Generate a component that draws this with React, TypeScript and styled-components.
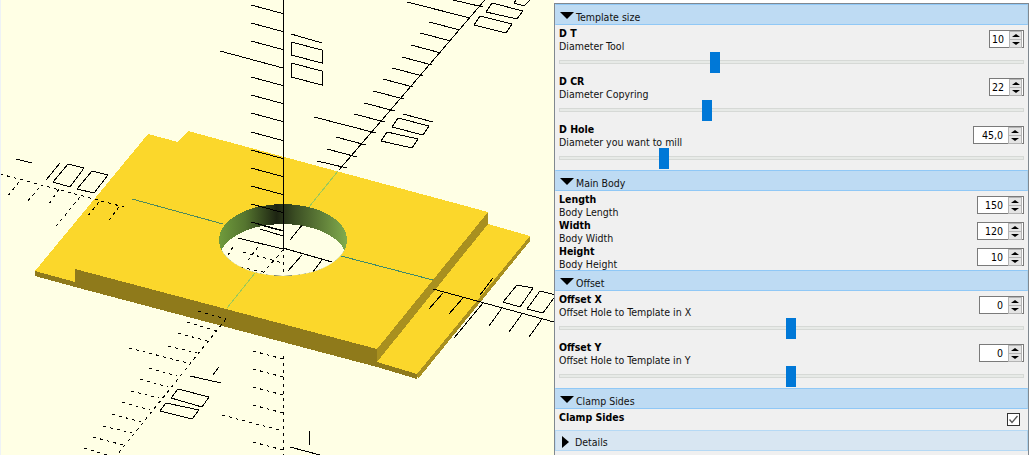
import styled, { createGlobalStyle } from "styled-components";

const GlobalStyle = createGlobalStyle`
  html, body {
    margin: 0;
    padding: 0;
    background: #fff;
  }
`;

const Window = styled.div`
  display: flex;
  width: 1033px;
  height: 455px;
  overflow: hidden;
  font-family: "DejaVu Sans", sans-serif;
  font-stretch: condensed;
  font-size: 10.5px;
  color: #111;
`;

const Viewport = styled.div`
  width: 554px;
  height: 455px;
  flex: none;
  border-left: 1px solid #eef2f6;
  box-sizing: border-box;
  background: #ffffe5;
  svg {
    display: block;
  }
`;

const Panel = styled.div`
  width: 475px;
  height: 452px;
  flex: none;
  margin-top: 3px;
  box-sizing: border-box;
  border: 1px solid #808890;
  border-bottom: 0;
  background: #f0f0f0;
`;

const SectionHeader = styled.div<{ $collapsed?: boolean }>`
  display: flex;
  align-items: center;
  height: 21px;
  box-sizing: border-box;
  margin-top: 1px;
  padding-top: 2px;
  padding-left: ${(p) => (p.$collapsed ? "6px" : "4px")};
  gap: ${(p) => (p.$collapsed ? "6px" : "2px")};
  background: ${(p) => (p.$collapsed ? "#d8e6f2" : "#bedbf3")};
  border: 1px solid ${(p) => (p.$collapsed ? "#b5d9f5" : "#90c8f6")};
  border-left-color: #bedbf3;
  border-right-color: #b0d4ee;
  &:first-child {
    margin-top: 0;
  }
`;

const SectionTitle = styled.span`
  margin-top: 2px;
`;

const ExpandedArrow = styled.span`
  width: 0;
  height: 0;
  border-left: 7px solid transparent;
  border-right: 7px solid transparent;
  border-top: 7px solid #000;
`;

const CollapsedArrow = styled.span`
  width: 0;
  height: 0;
  border-top: 6px solid transparent;
  border-bottom: 6px solid transparent;
  border-left: 7px solid #000;
`;

const Param = styled.div`
  display: flex;
  flex-direction: column;
`;

const ParamHead = styled.div`
  display: flex;
  justify-content: space-between;
  height: 26px;
  padding: 0 4px;
`;

const ParamText = styled.div`
  padding-top: 2px;
  line-height: 13px;
  white-space: nowrap;
`;

const ParamName = styled.div`
  font-weight: 700;
  color: #000;
`;

const SpinBox = styled.div<{ $width: number }>`
  display: flex;
  align-items: center;
  justify-content: space-between;
  width: ${(p) => p.$width}px;
  height: 18px;
  margin-top: 5px;
  box-sizing: border-box;
  border: 1px solid #7a7a7a;
  background: #fff;
  padding: 0 1px 0 2px;
`;

const SpinValue = styled.span`
  flex: 1;
  text-align: right;
  padding-right: 5px;
  line-height: 16px;
  color: #000;
`;

const SpinButtons = styled.div`
  display: flex;
  flex-direction: column;
  width: 14px;
`;

const SpinButton = styled.div<{ $down?: boolean }>`
  display: flex;
  align-items: center;
  justify-content: center;
  height: 7px;
  background: #e4e4e4;
  border: 1px solid #b4b4b4;
  border-top-width: ${(p) => (p.$down ? 0 : "1px")};
  &::before {
    content: "";
    width: 0;
    height: 0;
    border-left: 4px solid transparent;
    border-right: 4px solid transparent;
    ${(p) => (p.$down ? "border-top: 3px solid #000;" : "border-bottom: 3px solid #000;")}
  }
`;

const SliderBar = styled.div`
  position: relative;
  height: 21px;
  margin: 1px 4px 0;
  padding-top: 8px;
  box-sizing: border-box;
`;

const Track = styled.div`
  height: 4px;
  box-sizing: border-box;
  border: 1px solid #d6d9d6;
  background: #e7eae7;
`;

const Thumb = styled.div<{ $at: number }>`
  position: absolute;
  top: 0;
  left: ${(p) => p.$at}px;
  width: 10px;
  height: 21px;
  background: #0078d7;
`;

const CheckRow = styled.div`
  display: flex;
  justify-content: space-between;
  height: 20px;
  padding: 0 8px 0 4px;
`;

const CheckBox = styled.div`
  width: 13px;
  height: 13px;
  margin-top: 4px;
  box-sizing: border-box;
  border: 1px solid #333;
  background: #fff;
  svg {
    display: block;
  }
`;

type Seg = [number, number, number, number];

const solid: Seg[] = [
  [283, 0, 283, 248],
  [339, 170, 490, -6],
  [433, 289, 554, 322],
  // z ticks
  [251, 5, 283, 13.6], [251, 23, 283, 31.6], [251, 41, 283, 49.6], [220, 51, 283, 68],
  [251, 77, 283, 85.6], [251, 95, 283, 103.6], [251, 113, 283, 121.6], [251, 132, 283, 140.6],
  [251, 150, 283, 158.6], [251, 168, 283, 176.6], [251, 186, 283, 194.6], [251, 204, 283, 212.6],
  [251, 222, 283, 230.6],
  // y ticks
  [317, 161, 347, 168], [327, 149, 357, 157], [336, 137, 366, 145], [314, 117, 376, 133],
  [354, 114, 385, 122], [364, 103, 395, 111], [373, 91, 404, 99], [383, 79, 413, 87],
  [392, 68, 423, 76], [402, 57, 432, 65], [411, 45, 441, 53], [420, 33, 451, 41],
  [429, 22, 460, 30], [407, 2, 470, 18], [453, 0, 483, 7],
  // x ticks right
  [443, 293, 429, 309], [463, 298, 449, 314], [483, 303, 454, 338],
  [502, 308, 489, 326], [522, 314, 509, 332], [542, 319, 529, 337],
  // labels
  [291, 34, 322, 43], [403, 114, 433, 122], [493, 278, 480, 295],
  [309, 431, 309, 445], [290, 447, 320, 455],
  [16, 159, 32, 163], [60, 163, 46, 180],
  [190, 376, 221, 383], [219, 367, 213, 375],
];

const hiddenLines: Seg[] = [
  [0, 174, 124, 207],
  [19, 182, 7, 197], [39, 188, 27, 202], [59, 189, 47, 207], [80, 197, 53, 230],
  [99, 202, 87, 217], [119, 207, 107, 223],
  [283, 356, 283, 455],
  [253, 351, 283, 359], [253, 369, 283, 377], [253, 387, 283, 395], [253, 405, 283, 413],
  [222, 415, 283, 431], [253, 442, 283, 450],
  [226, 319, 117, 455],
  [198, 311, 226, 319], [187, 322, 217, 331], [178, 333, 207, 341], [168, 346, 197, 353],
  [129, 348, 188, 363], [149, 368, 177, 376], [140, 379, 168, 387], [131, 391, 159, 398],
  [122, 402, 150, 410], [112, 414, 141, 422], [103, 426, 132, 433], [93, 437, 123, 445],
  [84, 448, 113, 457],
];

const insideHole: Seg[] = [
  [260, 225, 283, 231], [260, 229, 283, 236], [238, 238, 283, 249], [283, 248, 332, 262],
  [302, 255, 288, 271], [322, 260, 313, 272], [310, 217, 298, 230], [302, 225, 290, 240],
];

const insideHoleDashed: Seg[] = [
  [283, 248, 283, 276], [243, 252, 283, 263], [240, 267, 263, 272], [283, 250, 263, 273],
  [233, 247, 228, 255], [258, 247, 248, 260],
];

const labelShapes = [
  "291,42 322,50 322,63 291,55",
  "291,63 322,71 322,85 291,77",
  "398,118 429,126 423,135 392,127",
  "387,132 418,139 412,148 381,141",
  "492,3 523,11 517,19 486,12",
  "480,16 512,24 506,33 474,25",
  "517,285 533,288 520,307 503,302",
  "540,291 556,295 543,313 527,309",
  "68,164 84,168 70,187 53,182",
  "92,171 108,175 94,193 77,189",
  "178,389 209,397 202,407 171,398",
  "166,403 199,410 192,419 160,411",
];

function Lines({ segs, dash }: { segs: Seg[]; dash?: string }) {
  return (
    <g stroke="#000" strokeWidth="1" strokeDasharray={dash}>
      {segs.map(([x1, y1, x2, y2], i) => (
        <line key={i} x1={x1} y1={y1} x2={x2} y2={y2} />
      ))}
    </g>
  );
}

function Scene() {
  return (
    <svg width="553" height="455" viewBox="1 0 553 455" shapeRendering="crispEdges">
      <defs>
        <linearGradient id="holeWall" gradientUnits="userSpaceOnUse" x1="220" y1="0" x2="346" y2="0">
          <stop offset="0" stopColor="#6f9a3c" />
          <stop offset="0.2" stopColor="#55752f" />
          <stop offset="0.45" stopColor="#1d2412" />
          <stop offset="0.6" stopColor="#3c4f24" />
          <stop offset="1" stopColor="#80aa4c" />
        </linearGradient>
        <clipPath id="holeTop">
          <ellipse cx="283" cy="240" rx="64" ry="36" />
        </clipPath>
        <clipPath id="holeOpen" clipPath="url(#holeTop)">
          <ellipse cx="283" cy="260" rx="64" ry="36" />
        </clipPath>
      </defs>

      {/* plate sides */}
      <polygon points="35,271 75,282 75,269 377,349 377,367 75,287 35,276" fill="#8f7a1b" />
      <polygon points="377,362 417,374 417,379 377,367" fill="#8f7a1b" />
      <polygon points="488,212 488,224 377,362 377,349" fill="#a9901f" />
      <polygon points="530,236 530,241 418,379 417,374" fill="#a9901f" />

      {/* plate top */}
      <polygon points="148,134 178,142 188,131 488,212 377,349 75,269 75,282 35,271" fill="#fbd72b" />
      <polygon points="488,224 530,236 417,374 377,362" fill="#fbd72b" />

      <line x1="132" y1="199" x2="223" y2="224" stroke="#4f8a5c" />
      <line x1="341" y1="256" x2="433" y2="280" stroke="#3f8a6a" />
      <line x1="309" y1="207" x2="338" y2="171" stroke="#9bc95a" />
      <line x1="227" y1="308" x2="255" y2="273" stroke="#9bc95a" />

      {/* hole */}
      <ellipse cx="283" cy="240" rx="64" ry="36" fill="url(#holeWall)" />
      <ellipse cx="283" cy="260" rx="64" ry="36" fill="#ffffe5" clipPath="url(#holeTop)" />
      <g clipPath="url(#holeOpen)">
        <Lines segs={insideHole} />
        <Lines segs={insideHoleDashed} dash="3 4" />
      </g>

      <Lines segs={solid} />
      <Lines segs={hiddenLines} dash="3 4" />
      <g fill="none" stroke="#000">
        {labelShapes.map((pts) => (
          <polygon key={pts} points={pts} />
        ))}
        <polyline points="516,0 514,3 524,6 530,0" />
      </g>
    </svg>
  );
}

type ParamInfo = {
  name: string;
  hint: string;
  value: string;
  width: number;
  thumb?: number;
};

function ParamRow({ name, hint, value, width, thumb }: ParamInfo) {
  return (
    <Param>
      <ParamHead>
        <ParamText>
          <ParamName>{name}</ParamName>
          {hint}
        </ParamText>
        <SpinBox $width={width}>
          <SpinValue>{value}</SpinValue>
          <SpinButtons>
            <SpinButton />
            <SpinButton $down />
          </SpinButtons>
        </SpinBox>
      </ParamHead>
      {thumb !== undefined && (
        <SliderBar>
          <Track />
          <Thumb $at={thumb} />
        </SliderBar>
      )}
    </Param>
  );
}

function Section({ title, children }: { title: string; children: React.ReactNode }) {
  return (
    <>
      <SectionHeader>
        <ExpandedArrow />
        <SectionTitle>{title}</SectionTitle>
      </SectionHeader>
      {children}
    </>
  );
}

export default function App() {
  return (
    <>
      <GlobalStyle />
      <Window>
        <Viewport>
          <Scene />
        </Viewport>
        <Panel>
          <Section title="Template size">
            <ParamRow name="D T" hint="Diameter Tool" value="10" width={35} thumb={151} />
            <ParamRow name="D CR" hint="Diameter Copyring" value="22" width={35} thumb={143} />
            <ParamRow name="D Hole" hint="Diameter you want to mill" value="45,0" width={51} thumb={100} />
          </Section>
          <Section title="Main Body">
            <ParamRow name="Length" hint="Body Length" value="150" width={47} />
            <ParamRow name="Width" hint="Body Width" value="120" width={47} />
            <ParamRow name="Height" hint="Body Height" value="10" width={47} />
          </Section>
          <Section title="Offset">
            <ParamRow name="Offset X" hint="Offset Hole to Template in X" value="0" width={45} thumb={227} />
            <ParamRow name="Offset Y" hint="Offset Hole to Template in Y" value="0" width={45} thumb={227} />
          </Section>
          <Section title="Clamp Sides">
            <CheckRow>
              <ParamText>
                <ParamName>Clamp Sides</ParamName>
              </ParamText>
              <CheckBox>
                <svg width="11" height="11" viewBox="0 0 11 11">
                  <path d="M1.5 5.5 L4 8.5 L9.5 2" fill="none" stroke="#555" strokeWidth="1.3" />
                </svg>
              </CheckBox>
            </CheckRow>
          </Section>
          <SectionHeader $collapsed>
            <CollapsedArrow />
            Details
          </SectionHeader>
        </Panel>
      </Window>
    </>
  );
}
